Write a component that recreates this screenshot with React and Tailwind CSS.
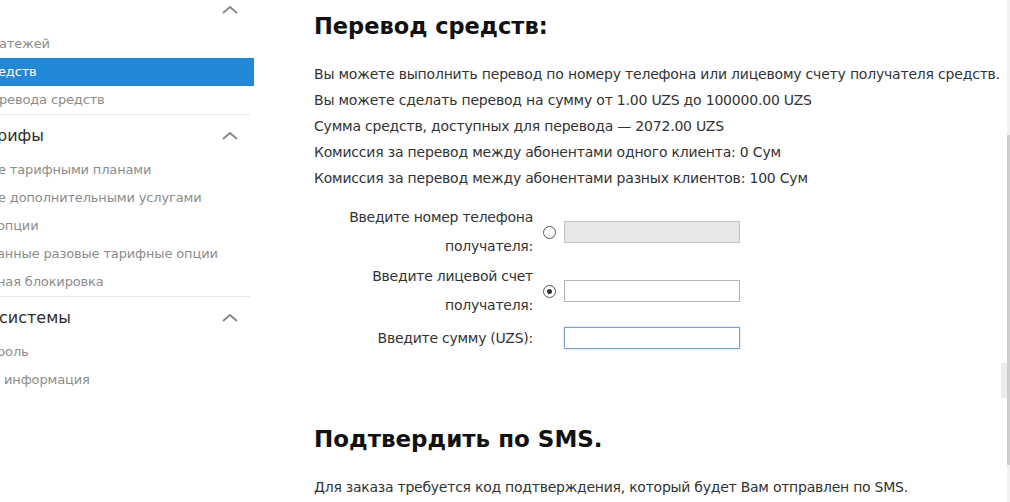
import React from "react";

const F = { fontFamily: '"DejaVu Sans", "Open Sans", sans-serif' };

function Chevron() {
  return (
    <svg width="16" height="8" viewBox="0 0 16 8" className="shrink-0">
      <polyline points="1,7 8,1 15,7" fill="none" stroke="#8a8a8a" strokeWidth="2" />
    </svg>
  );
}

function Item({ children, active, shift = 0 }) {
  return (
    <div
      className={
        "h-[28px] flex items-center text-[13px] tracking-[-0.15px] whitespace-nowrap overflow-hidden " +
        (active ? "bg-[#2288d8] text-white" : "text-[#8c8c8c]")
      }
    >
      <span style={{ marginLeft: shift }}>{children}</span>
    </div>
  );
}

function Header({ children, shift = 0 }) {
  return (
    <div className="h-[41px] flex items-center justify-between pr-[16px] text-[16px] text-[#2e2e2e] whitespace-nowrap">
      <span style={{ marginLeft: shift }}>{children}</span>
      <Chevron />
    </div>
  );
}

export default function App() {
  return (
    <div className="relative w-[1010px] h-[502px] overflow-hidden bg-white flex" style={F}>
      {/* Sidebar */}
      <div className="w-[254px] shrink-0 overflow-hidden">
        <div className="-mt-[11px]">
          <div className="h-[41px] flex justify-between pr-[16px] text-[16px] text-[#2e2e2e] whitespace-nowrap">
            <span className="ml-[172px] -mt-[3px] leading-[12px]">ету</span>
            <div className="flex items-center">
              <Chevron />
            </div>
          </div>
          <Item shift={-1}>атежей</Item>
          <Item active shift={-2}>едств</Item>
          <Item shift={-1}>ревода средств</Item>
          <div className="h-px bg-[#e6e6e6] mr-[4px]" />
          <Header shift={-3}>рифы</Header>
          <Item shift={-2}>е тарифными планами</Item>
          <Item shift={-2}>е дополнительными услугами</Item>
          <Item shift={-3}>опции</Item>
          <Item shift={-3}>анные разовые тарифные опции</Item>
          <Item shift={-3}>ная блокировка</Item>
          <div className="h-px bg-[#e6e6e6] mr-[4px]" />
          <Header shift={-1}>системы</Header>
          <Item shift={-3}>роль</Item>
          <Item shift={4}>информация</Item>
        </div>
      </div>

      {/* Main */}
      <div className="flex-1 pl-[60px] pt-[12px] text-[#333333]">
        <h1 className="text-[22.5px] leading-[28px] font-bold text-[#111111]">Перевод средств:</h1>
        <div className="mt-[21px] text-[14px] leading-[26px] tracking-[-0.2px] whitespace-nowrap">
          <p>Вы можете выполнить перевод по номеру телефона или лицевому счету получателя средств.</p>
          <p>Вы можете сделать перевод на сумму от 1.00 UZS до 100000.00 UZS</p>
          <p>Сумма средств, доступных для перевода — 2072.00 UZS</p>
          <p>Комиссия за перевод между абонентами одного клиента: 0 Сум</p>
          <p>Комиссия за перевод между абонентами разных клиентов: 100 Сум</p>
        </div>

        <div className="mt-[12px] grid grid-cols-[220px_30px_176px] gap-y-[1px] items-center text-[14px] tracking-[-0.25px]">
          <div className="text-right leading-[29px] pr-[1px]">
            Введите номер телефона<br />получателя:
          </div>
          <div className="flex justify-center">
            <span className="w-[13px] h-[13px] rounded-full border border-[#555555] bg-white" />
          </div>
          <div className="h-[22px] border border-[#c2c2c2] bg-[#e8e8e8]" />

          <div className="text-right leading-[29px] pr-[1px]">
            Введите лицевой счет<br />получателя:
          </div>
          <div className="flex justify-center">
            <span className="w-[13px] h-[13px] rounded-full border border-[#555555] bg-white flex items-center justify-center">
              <span className="w-[5px] h-[5px] rounded-full bg-[#333333]" />
            </span>
          </div>
          <div className="h-[22px] border border-[#b5b5b5] bg-white" />

          <div className="text-right leading-[34px] pr-[1px]">Введите сумму (UZS):</div>
          <div />
          <div className="h-[22px] border border-[#7d9fd6] bg-white shadow-[0_0_2px_#a9c3ec]" />
        </div>

        <h2 className="mt-[70px] text-[23px] leading-[28px] font-bold text-[#111111]">Подтвердить по SMS.</h2>
        <p className="mt-[21px] text-[14px] leading-[26px] tracking-[-0.25px] whitespace-nowrap">
          Для заказа требуется код подтверждения, который будет Вам отправлен по SMS.
        </p>
      </div>

      {/* Scrollbar edge */}
      <div className="w-[3px] shrink-0 bg-[#f1f1f1] flex flex-col">
        <div className="h-[135px]" />
        <div className="h-[330px] bg-[#cdcdcd]" />
      </div>
      <div className="absolute left-[1001px] top-[363px] w-[6px] h-[35px] bg-[#ececec]" />
    </div>
  );
}
